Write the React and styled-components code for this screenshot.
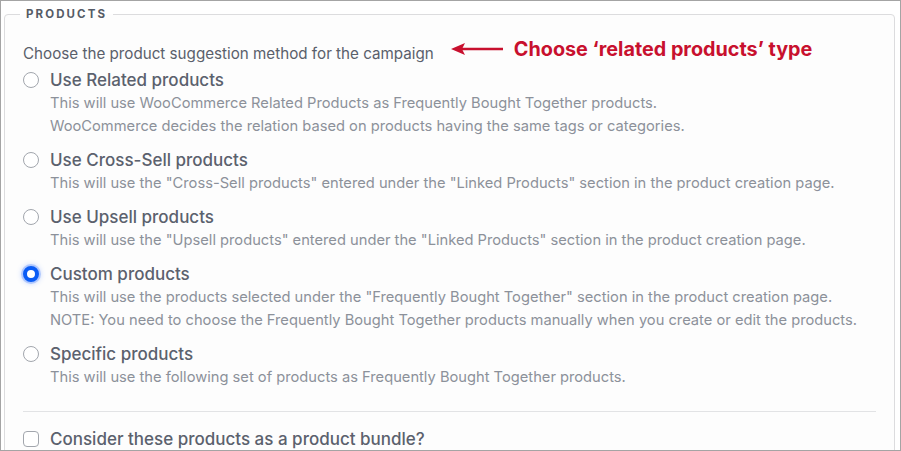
import React from 'react'
import styled, { createGlobalStyle } from 'styled-components'

const GlobalStyle = createGlobalStyle`
  html, body {
    margin: 0;
    padding: 0;
    background: #ffffff;
  }
  body {
    font-family: Inter, 'Liberation Sans', sans-serif;
  }
`

const options = [
  {
    title: 'Use Related products',
    lines: [
      'This will use WooCommerce Related Products as Frequently Bought Together products.',
      'WooCommerce decides the relation based on products having the same tags or categories.',
    ],
  },
  {
    title: 'Use Cross-Sell products',
    lines: [
      'This will use the "Cross-Sell products" entered under the "Linked Products" section in the product creation page.',
    ],
  },
  {
    title: 'Use Upsell products',
    lines: [
      'This will use the "Upsell products" entered under the "Linked Products" section in the product creation page.',
    ],
  },
  {
    title: 'Custom products',
    checked: true,
    lines: [
      'This will use the products selected under the "Frequently Bought Together" section in the product creation page.',
      'NOTE: You need to choose the Frequently Bought Together products manually when you create or edit the products.',
    ],
  },
  {
    title: 'Specific products',
    lines: ['This will use the following set of products as Frequently Bought Together products.'],
  },
]

const App = () => {
  return (
    <>
      <GlobalStyle />
      <Frame>
        <Fieldset>
          <Legend>PRODUCTS</Legend>
          <IntroRow>
            <Intro>Choose the product suggestion method for the campaign</Intro>
            <Callout>
              <svg width="52" height="14" viewBox="0 0 52 14">
                <line x1="10" y1="7" x2="52" y2="7" stroke="#c8102e" strokeWidth="2.6" />
                <polygon points="0,7 14,1 11,7 14,13" fill="#c8102e" />
              </svg>
              <CalloutText>Choose ‘related products’ type</CalloutText>
            </Callout>
          </IntroRow>
          <OptionList>
            {options.map(opt => (
              <Option key={opt.title}>
                <OptionHead>
                  <Radio checked={opt.checked} />
                  <OptionTitle>{opt.title}</OptionTitle>
                </OptionHead>
                <OptionDesc>
                  {opt.lines.map(line => (
                    <div key={line}>{line}</div>
                  ))}
                </OptionDesc>
              </Option>
            ))}
          </OptionList>
          <Divider />
          <CheckRow>
            <Checkbox />
            <OptionTitle>Consider these products as a product bundle?</OptionTitle>
          </CheckRow>
        </Fieldset>
      </Frame>
    </>
  )
}

export default App

const Frame = styled.div`
  box-sizing: border-box;
  width: 901px;
  height: 451px;
  border: 1px solid #a4a4a4;
  padding: 6px 5px 0 3px;
  overflow: hidden;
  background: #ffffff;
`
const Fieldset = styled.fieldset`
  margin: 0;
  min-width: 0;
  border: 1px solid #dcdcde;
  border-radius: 4px;
  padding: 17px 18px 40px 18px;
  background: #fdfdfd;
`
const Legend = styled.legend`
  margin-left: -3px;
  padding: 0 6px;
  font-size: 11.5px;
  font-weight: 700;
  letter-spacing: 2.1px;
  color: #555b66;
  line-height: 14px;
`
const IntroRow = styled.div`
  display: flex;
  align-items: center;
  gap: 17px;
  height: 30px;
`
const Intro = styled.div`
  font-size: 15.2px;
  color: #5a606b;
`
const Callout = styled.div`
  display: flex;
  align-items: center;
  gap: 11px;
  margin-top: -9px;
`
const CalloutText = styled.div`
  font-family: Inter, 'Liberation Sans', sans-serif;
  font-size: 19.8px;
  font-weight: 700;
  color: #c8102e;
`
const OptionList = styled.div`
  display: flex;
  flex-direction: column;
  gap: 10px;
`
const Option = styled.div`
  display: flex;
  flex-direction: column;
`
const OptionHead = styled.div`
  display: flex;
  align-items: center;
  gap: 11px;
  height: 24px;
`
const OptionTitle = styled.span`
  font-size: 17px;
  font-weight: 500;
  color: #5b616d;
`
const Radio = styled.span`
  box-sizing: border-box;
  width: 16px;
  height: 16px;
  border-radius: 50%;
  flex: none;
  border: ${p => (p.checked ? '4.5px solid #0a5cf5' : '1px solid #a2a6ad')};
  background: #ffffff;
  box-shadow: ${p => (p.checked ? '0 0 0 2px rgba(90, 140, 255, 0.35), 0 0 5px 2px rgba(90, 140, 255, 0.3)' : 'none')};
`
const OptionDesc = styled.div`
  padding-left: 27px;
  font-size: 14.7px;
  line-height: 23px;
  color: #8c919a;
`
const Divider = styled.div`
  height: 1px;
  background: #e2e3e5;
  margin: 22px 0 17px 0;
`
const CheckRow = styled.div`
  display: flex;
  align-items: center;
  gap: 11px;
`
const Checkbox = styled.span`
  box-sizing: border-box;
  width: 16px;
  height: 16px;
  border-radius: 4px;
  border: 1px solid #a2a6ad;
  background: #ffffff;
`
